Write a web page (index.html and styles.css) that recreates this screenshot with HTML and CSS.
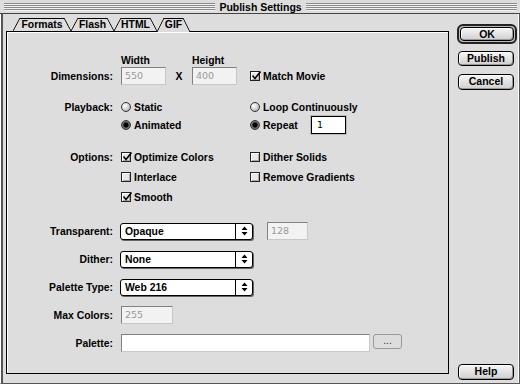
FILE: index.html
```html
<!DOCTYPE html>
<html>
<head>
<meta charset="UTF-8">
<title>Publish Settings</title>
<link rel="stylesheet" href="styles.css">
</head>
<body>
<div class="window">
    <div class="titlebar">
        <span class="stripes"></span>
        <span class="title">Publish Settings</span>
        <span class="stripes"></span>
    </div>
    <div class="frame">
        <div class="main">
            <div class="tabs">
                <div class="tab t-formats"><span>Formats</span></div>
                <div class="tab t-flash"><span>Flash</span></div>
                <div class="tab t-html"><span>HTML</span></div>
                <div class="tab t-gif active"><span>GIF</span></div>
            </div>
            <div class="panel">
                <div class="group g-dims">
                    <div class="row row-head">
                        <span class="label"></span>
                        <span class="head head-w">Width</span>
                        <span class="head">Height</span>
                    </div>
                    <div class="row row-field">
                        <span class="label">Dimensions:</span>
                        <span class="field dim">550</span>
                        <span class="times">X</span>
                        <span class="field dim">400</span>
                        <span class="opt match"><span class="check on"><svg width="10" height="10" viewBox="0 0 10 10"><path d="M1.5 4.5 L4 7.5 L9.5 0.5" fill="none" stroke="#000" stroke-width="1.6"/></svg></span>Match Movie</span>
                    </div>
                </div>

                <div class="group g-play">
                    <div class="row">
                        <span class="label">Playback:</span>
                        <span class="col1 opt"><span class="radio"></span>Static</span>
                        <span class="opt"><span class="radio"></span>Loop Continuously</span>
                    </div>
                    <div class="row row-repeat">
                        <span class="label"></span>
                        <span class="col1 opt"><span class="radio on"></span>Animated</span>
                        <span class="opt repeat"><span class="radio on"></span>Repeat</span>
                        <span class="field active">1</span>
                    </div>
                </div>

                <div class="group g-opts">
                    <div class="row">
                        <span class="label">Options:</span>
                        <span class="col1 opt"><span class="check on"><svg width="10" height="10" viewBox="0 0 10 10"><path d="M1.5 4.5 L4 7.5 L9.5 0.5" fill="none" stroke="#000" stroke-width="1.6"/></svg></span>Optimize Colors</span>
                        <span class="opt"><span class="check"></span>Dither Solids</span>
                    </div>
                    <div class="row">
                        <span class="label"></span>
                        <span class="col1 opt"><span class="check"></span>Interlace</span>
                        <span class="opt"><span class="check"></span>Remove Gradients</span>
                    </div>
                    <div class="row">
                        <span class="label"></span>
                        <span class="col1 opt"><span class="check on"><svg width="10" height="10" viewBox="0 0 10 10"><path d="M1.5 4.5 L4 7.5 L9.5 0.5" fill="none" stroke="#000" stroke-width="1.6"/></svg></span>Smooth</span>
                    </div>
                </div>

                <div class="group g-pops">
                    <div class="row row-field">
                        <span class="label">Transparent:</span>
                        <span class="popup"><span class="value">Opaque</span><span class="arrows"><svg width="7" height="10" viewBox="0 0 7 10"><path d="M3.5 0.5 L6.5 4 H0.5 Z M3.5 9.5 L6.5 6 H0.5 Z" fill="#000"/></svg></span></span>
                        <span class="field alpha">128</span>
                    </div>
                    <div class="row row-field">
                        <span class="label">Dither:</span>
                        <span class="popup"><span class="value">None</span><span class="arrows"><svg width="7" height="10" viewBox="0 0 7 10"><path d="M3.5 0.5 L6.5 4 H0.5 Z M3.5 9.5 L6.5 6 H0.5 Z" fill="#000"/></svg></span></span>
                    </div>
                    <div class="row row-field">
                        <span class="label">Palette Type:</span>
                        <span class="popup"><span class="value">Web 216</span><span class="arrows"><svg width="7" height="10" viewBox="0 0 7 10"><path d="M3.5 0.5 L6.5 4 H0.5 Z M3.5 9.5 L6.5 6 H0.5 Z" fill="#000"/></svg></span></span>
                    </div>
                    <div class="row row-field">
                        <span class="label">Max Colors:</span>
                        <span class="field colors">255</span>
                    </div>
                    <div class="row row-field">
                        <span class="label">Palette:</span>
                        <span class="field palette"></span>
                        <span class="browse">...</span>
                    </div>
                </div>
            </div>
        </div>
        <div class="side">
            <div class="ring"><span class="btn">OK</span></div>
            <span class="btn publish">Publish</span>
            <span class="btn cancel">Cancel</span>
            <span class="btn help">Help</span>
        </div>
    </div>
</div>
</body>
</html>
```

FILE: styles.css
```css
html, body {
    margin: 0;
    padding: 0;
    background: #dddddd;
}
body {
    font-family: "Liberation Sans", Arial, sans-serif;
    font-weight: bold;
    font-size: 10.4px;
    color: #000;
}
.window {
    width: 520px;
    height: 384px;
    overflow: hidden;
}

/* title bar */
.titlebar {
    height: 13px;
    display: flex;
    align-items: center;
    padding: 0 3px 0 4px;
    border-bottom: 1px solid #444;
}
.stripes {
    flex: 1;
    height: 8px;
    background: repeating-linear-gradient(to bottom, #8a8a8a 0, #8a8a8a 1px, #f2f2f2 1px, #f2f2f2 2px);
}
.title {
    padding: 0 4px;
    line-height: 12px;
    font-size: 10.5px;
}

/* window body */
.frame {
    height: 370px;
    box-sizing: border-box;
    display: flex;
    border-left: 1px solid #fff;
    border-right: 1px solid #555;
    border-bottom: 1px solid #555;
    box-shadow: inset 2px 0 #555, inset -1px 0 #fff;
}
.main {
    width: 443px;
    margin-left: 5px;
    padding-top: 4px;
}

/* tabs */
.tabs {
    display: flex;
    height: 13px;
    padding-left: 7px;
}
.tab {
    position: relative;
    padding: 0 7px;
    height: 13px;
}
.tab span {
    display: block;
    height: 12px;
    border-top: 1px solid #000;
    line-height: 12px;
    text-align: center;
}
.tab::before,
.tab::after {
    content: '';
    position: absolute;
    top: 0;
    bottom: 0;
    width: 7px;
}
.tab::before {
    left: 0;
    background: linear-gradient(to bottom right, transparent calc(50% - 0.8px), #000 50%, transparent calc(50% + 0.8px));
}
.tab::after {
    right: 0;
    background: linear-gradient(to bottom left, transparent calc(50% - 0.8px), #000 50%, transparent calc(50% + 0.8px));
}
.t-formats span { width: 44px; }
.t-flash span { width: 29px; }
.t-html span { width: 29px; }
.t-gif span { width: 19px; }
.tab.active {
    z-index: 2;
    height: 14px;
    margin-bottom: -1px;
}
.tab.active span {
    height: 13px;
    background: #dddddd;
}
.tab.active::before {
    background: linear-gradient(to bottom right, transparent calc(50% - 0.8px), #000 50%, #dddddd calc(50% + 0.8px));
}
.tab.active::after {
    background: linear-gradient(to bottom left, transparent calc(50% - 0.8px), #000 50%, #dddddd calc(50% + 0.8px));
}

/* panel */
.panel {
    position: relative;
    height: 343px;
    box-sizing: border-box;
    border: 1px solid #000;
    box-shadow: inset 1px 1px #fff;
}
.group {
    display: flex;
    flex-direction: column;
}
.g-dims { margin-top: 23px; row-gap: 2px; }
.g-play { margin-top: 15px; row-gap: 1px; }
.g-opts { margin-top: 15px; row-gap: 6px; }
.g-pops { margin-top: 18px; row-gap: 10px; }

.row {
    display: flex;
    align-items: center;
    height: 14px;
    white-space: nowrap;
}
.row-head { height: 10px; }
.row-field { height: 18px; }
.row-repeat { height: 20px; }
.label {
    width: 106px;
    margin-right: 8px;
    text-align: right;
}
.head-w { width: 71px; }
.col1 { width: 129px; }
.opt {
    display: flex;
    align-items: center;
}

/* controls */
.check {
    width: 10px;
    height: 10px;
    box-sizing: border-box;
    border: 1px solid #222;
    background: #e8e8e8;
    box-shadow: inset 1px 1px #fff, inset -1px -1px #aaa;
    margin-right: 3px;
    position: relative;
}
.check svg {
    position: absolute;
    left: 0;
    top: -1px;
}
.radio {
    width: 10px;
    height: 10px;
    box-sizing: border-box;
    border: 1px solid #333;
    border-radius: 50%;
    background: radial-gradient(circle at 35% 35%, #fff 0, #ddd 40%, #999 100%);
    margin-right: 3px;
}
.radio.on {
    background: radial-gradient(circle at 50% 50%, #000 0, #000 2px, #666 3px, #999 100%);
}
.field {
    height: 18px;
    box-sizing: border-box;
    border: 1px solid;
    border-color: #808080 #c8c8c8 #c8c8c8 #808080;
    background: #f2f2f2;
    color: #999;
    font-family: "DejaVu Sans", sans-serif;
    font-weight: normal;
    font-size: 9.5px;
    line-height: 16px;
    padding-left: 3px;
}
.dim { width: 45px; }
.times {
    width: 26px;
    text-align: center;
}
.match {
    margin-left: 13px;
}
.repeat { width: 61px; }
.field.active {
    width: 35px;
    height: 18px;
    border: 1px solid #000;
    background: #fff;
    color: #000;
    box-shadow: 0 0 0 1px #bbb;
    padding-left: 5px;
}
.popup {
    display: flex;
    width: 133px;
    height: 17px;
    box-sizing: border-box;
    margin-left: -1px;
    border: 1px solid #000;
    border-radius: 3px;
    background: #fff;
    box-shadow: 1px 1px 0 #666;
    line-height: 15px;
}
.popup .value {
    flex: 1;
    padding-left: 4px;
}
.popup .arrows {
    width: 16px;
    border-left: 1px solid #000;
    display: flex;
    align-items: center;
    justify-content: center;
}
.alpha {
    width: 41px;
    margin-left: 14px;
}
.colors { width: 52px; }
.palette {
    width: 249px;
    background: #fff;
}
.browse {
    width: 29px;
    height: 15px;
    box-sizing: border-box;
    margin-left: 3px;
    align-self: flex-start;
    border: 1px solid #999;
    border-radius: 3px;
    text-align: center;
    line-height: 11px;
    font-weight: normal;
    color: #333;
}

/* buttons */
.side {
    width: 60px;
    margin-left: 8px;
    padding-top: 10px;
    padding-bottom: 3px;
    display: flex;
    flex-direction: column;
}
.btn {
    display: block;
    height: 15px;
    box-sizing: border-box;
    border: 1px solid #000;
    border-radius: 4px;
    background: linear-gradient(#f6f6f6, #cfcfcf);
    box-shadow: inset 1px 1px #fff, inset -1px -1px #999;
    text-align: center;
    line-height: 13px;
    font-size: 10.5px;
}
.ring {
    height: 20px;
    box-sizing: border-box;
    border: 2px solid #222;
    border-radius: 6px;
    padding: 1px;
    background: #bbb;
}
.ring .btn {
    height: 14px;
    line-height: 12px;
}
.publish {
    width: 56px;
    margin: 7px 0 0 1px;
}
.cancel {
    width: 56px;
    height: 16px;
    margin: 8px 0 0 1px;
}
.help {
    width: 56px;
    height: 16px;
    margin: auto 0 0 1px;
}
```
